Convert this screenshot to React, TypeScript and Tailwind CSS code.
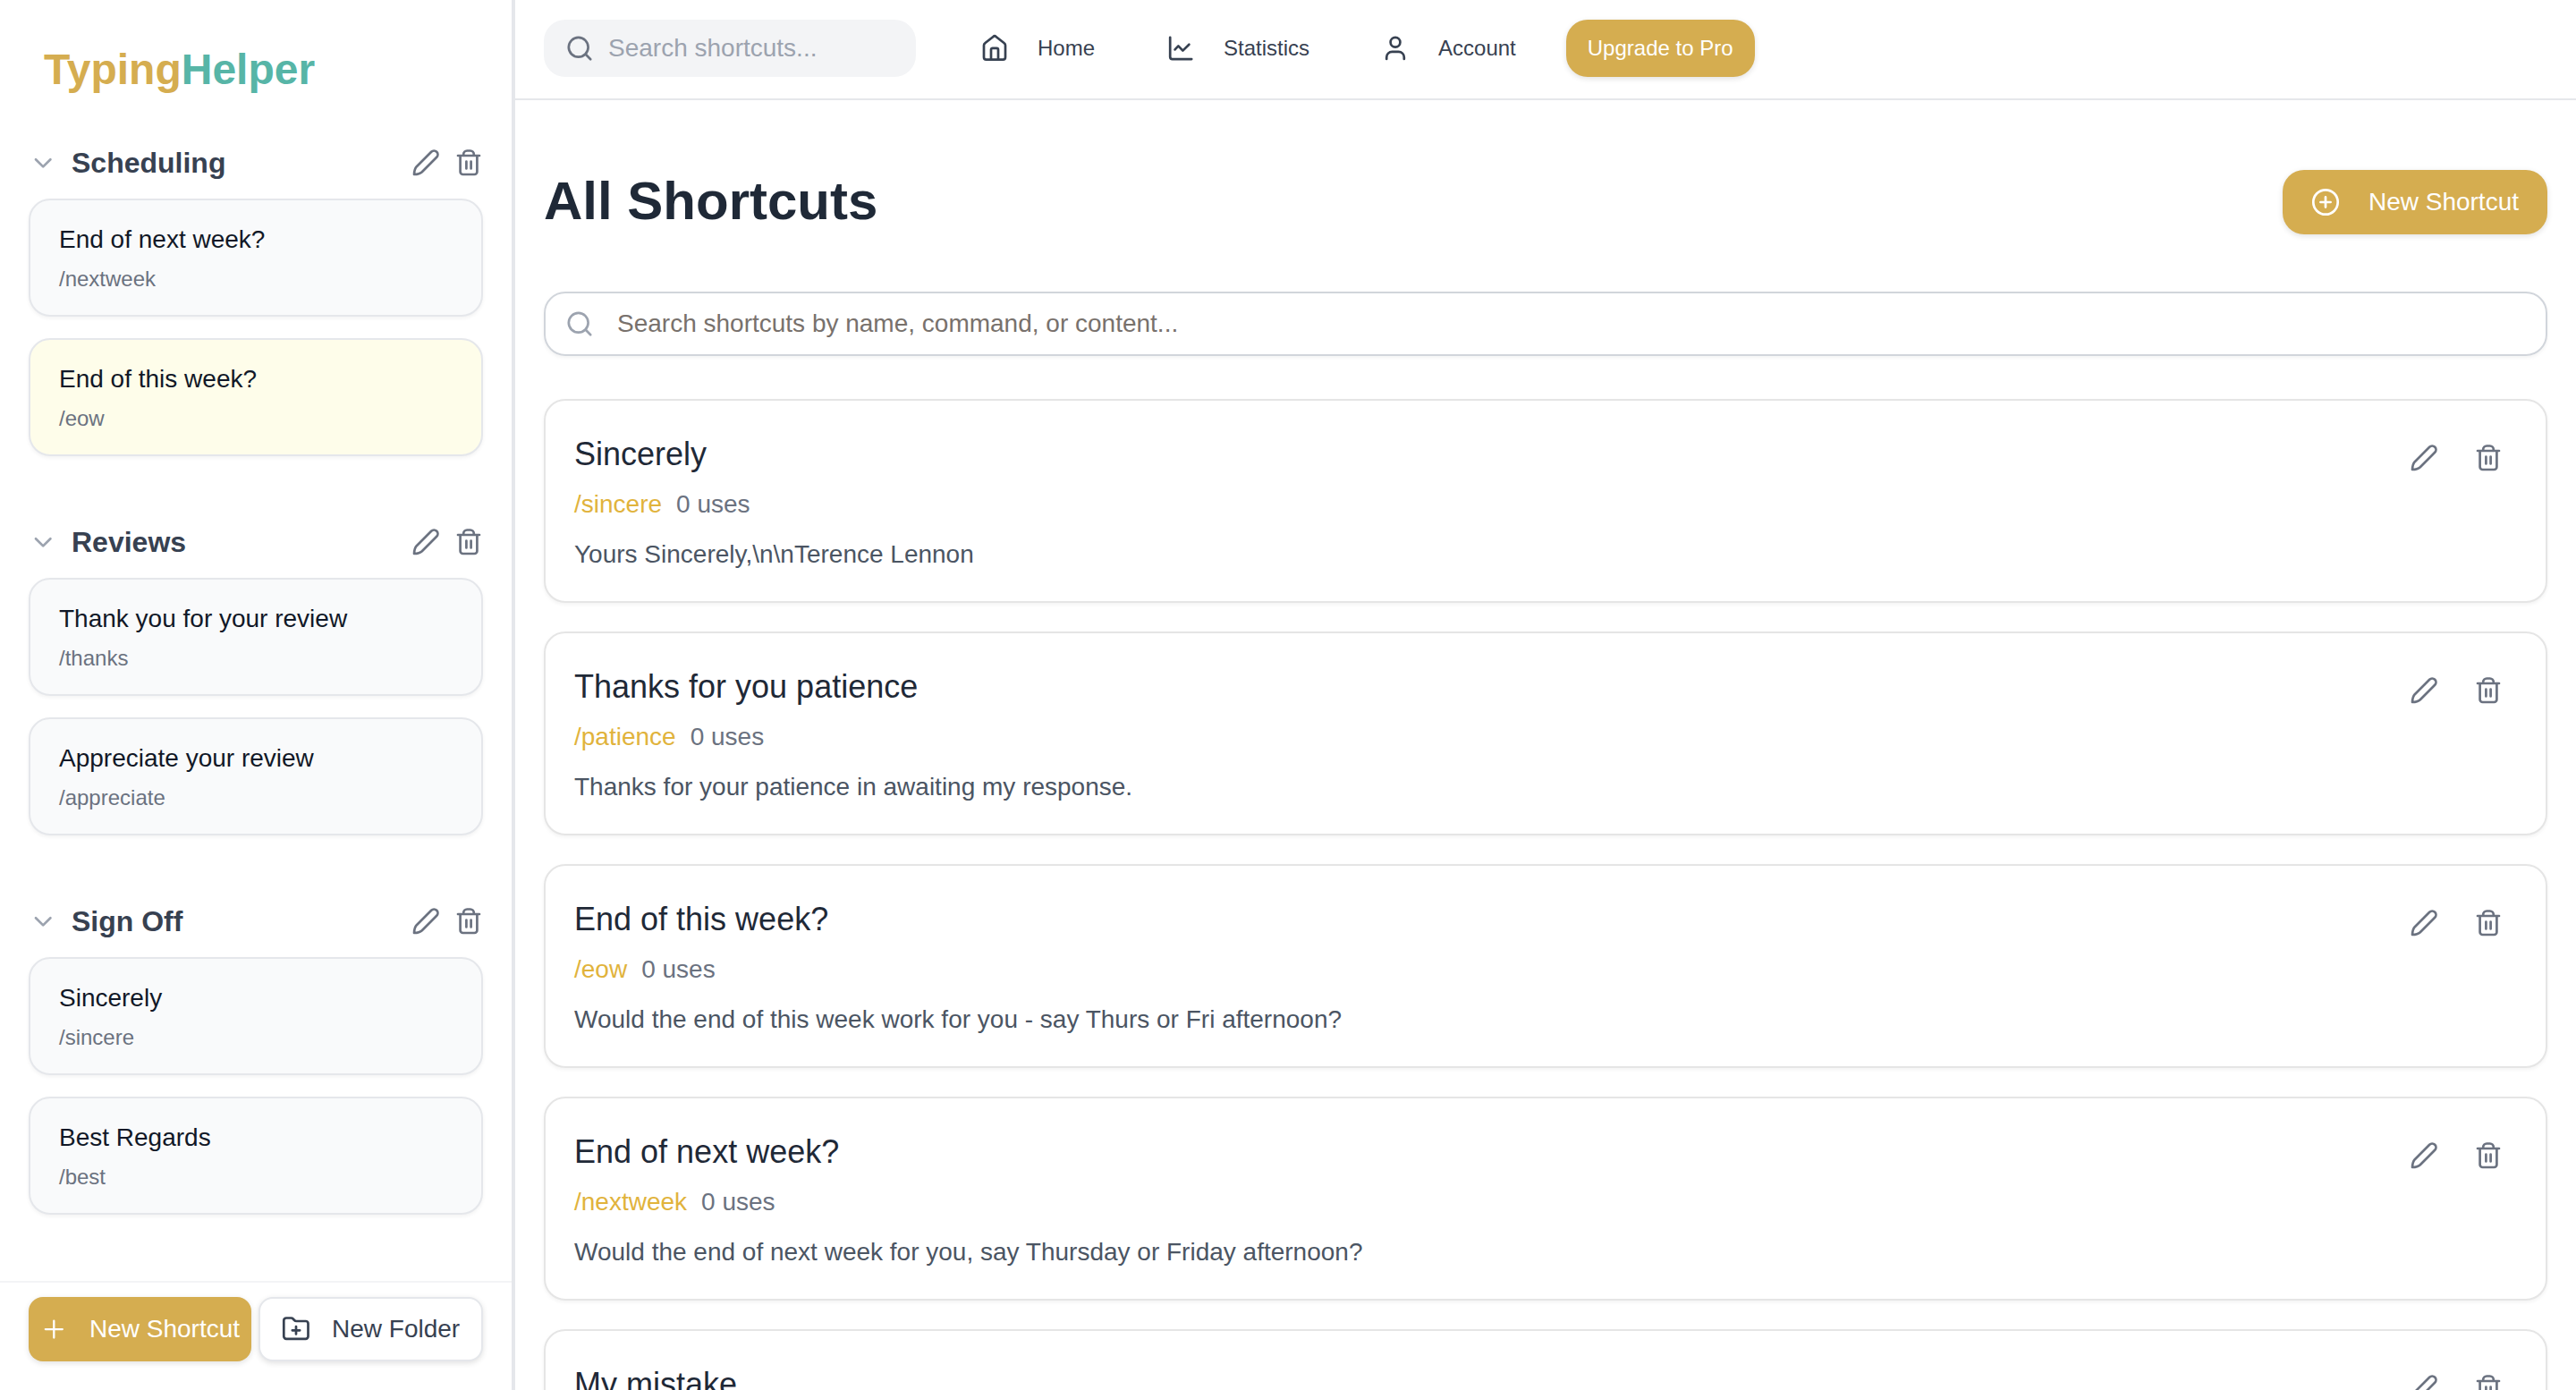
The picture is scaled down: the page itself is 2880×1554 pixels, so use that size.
import type { ReactNode } from 'react'

type Shortcut = {
  name: string
  command: string
  content?: string
  active?: boolean
}

const folders: { name: string; shortcuts: Shortcut[] }[] = [
  {
    name: 'Scheduling',
    shortcuts: [
      { name: 'End of next week?', command: '/nextweek' },
      { name: 'End of this week?', command: '/eow', active: true },
    ],
  },
  {
    name: 'Reviews',
    shortcuts: [
      { name: 'Thank you for your review', command: '/thanks' },
      { name: 'Appreciate your review', command: '/appreciate' },
    ],
  },
  {
    name: 'Sign Off',
    shortcuts: [
      { name: 'Sincerely', command: '/sincere' },
      { name: 'Best Regards', command: '/best' },
    ],
  },
]

const shortcuts: Shortcut[] = [
  { name: 'Sincerely', command: '/sincere', content: 'Yours Sincerely,\\n\\nTerence Lennon' },
  { name: 'Thanks for you patience', command: '/patience', content: 'Thanks for your patience in awaiting my response.' },
  { name: 'End of this week?', command: '/eow', content: 'Would the end of this week work for you - say Thurs or Fri afternoon?' },
  { name: 'End of next week?', command: '/nextweek', content: 'Would the end of next week for you, say Thursday or Friday afternoon?' },
  { name: 'My mistake' , command: '' },
]

function Icon({ children, className = '' }: { children: ReactNode; className?: string }) {
  return (
    <svg
      className={`size-10 shrink-0 ${className}`}
      viewBox="0 0 40 40"
      fill="none"
      stroke="currentColor"
      strokeWidth="2.7"
      strokeLinecap="round"
      strokeLinejoin="round"
    >
      {children}
    </svg>
  )
}

function PencilIcon() {
  return (
    <Icon>
      <path d="M26.2 7.8a4.1 4.1 0 0 1 6 6L15.8 30.2Q13 32.8 7 33 7.2 27 9.8 24.2Z" />
    </Icon>
  )
}

function TrashIcon() {
  return (
    <Icon>
      <path d="M8 12h24M10.6 12v18a3 3 0 0 0 3 3h12.8a3 3 0 0 0 3-3V12M14.2 12v-1.5a4 4 0 0 1 4-4h3.6a4 4 0 0 1 4 4V12M17.4 18.5v8M22.6 18.5v8" />
    </Icon>
  )
}

function SearchIcon({ className }: { className?: string }) {
  return (
    <Icon className={className}>
      <circle cx="18.7" cy="18.8" r="10.9" />
      <path d="m26.8 26.8 5.4 5.4" />
    </Icon>
  )
}

function HomeIcon() {
  return (
    <Icon>
      <path d="M8 16.8c0-1 .4-1.9 1.2-2.5l9.6-7.6a2 2 0 0 1 2.4 0l9.6 7.6c.8.6 1.2 1.5 1.2 2.5V30a2.6 2.6 0 0 1-2.6 2.6H10.6A2.6 2.6 0 0 1 8 30ZM16 32.6V21.5a1.7 1.7 0 0 1 1.7-1.7h4.6a1.7 1.7 0 0 1 1.7 1.7v11" />
    </Icon>
  )
}

function ChartIcon() {
  return (
    <Icon>
      <path d="M8.2 7.8v21.7a2.6 2.6 0 0 0 2.6 2.6h21.4M13.6 21.4l3.8-4 5 5.2 7-6.8" />
    </Icon>
  )
}

function UserIcon() {
  return (
    <Icon>
      <circle cx="20" cy="13.3" r="5.4" />
      <path d="M10.2 32V30a6.2 6.2 0 0 1 6.2-6.2h7.2a6.2 6.2 0 0 1 6.2 6.2v2" />
    </Icon>
  )
}

function Sidebar() {
  return (
    <aside className="flex w-[576px] shrink-0 flex-col border-r-4 border-[#e5e7eb]">
      <div className="pt-12 pl-[49px] text-5xl leading-[60px] font-bold">
        <span className="text-[#d5ad50]">Typing</span>
        <span className="text-[#57b5a7]">Helper</span>
      </div>

      <nav className="flex min-h-0 flex-1 flex-col gap-[72px] overflow-hidden px-8 pt-[50px]">
        {folders.map((folder) => (
          <section key={folder.name}>
            <div className="mb-4 -ml-1 flex h-12 items-center">
              <Icon className="text-[#9ca3af]">
                <path d="m12 16.2 8.2 8.2 8.2-8.2" />
              </Icon>
              <h2 className="ml-3 flex-1 text-[32px] leading-10 font-bold text-[#374151]">{folder.name}</h2>
              <div className="-mr-1 flex gap-2 text-[#6b7280]">
                <PencilIcon />
                <TrashIcon />
              </div>
            </div>
            <div className="flex flex-col gap-6">
              {folder.shortcuts.map((item) => (
                <div
                  key={item.command}
                  className={`rounded-[24px] border-2 border-[#e5e7eb] px-8 py-6 shadow-[0_2px_4px_rgba(0,0,0,0.05)] ${
                    item.active ? 'bg-[#fefdea]' : 'bg-[#f9fafb]'
                  }`}
                >
                  <p className="text-[28px] leading-10 text-[#111827]">{item.name}</p>
                  <p className="mt-2 text-2xl leading-8 text-[#6b7280]">{item.command}</p>
                </div>
              ))}
            </div>
          </section>
        ))}
      </nav>

      <div className="flex h-[122px] gap-2 border-t-2 border-[#f3f4f6] px-8 pt-4">
        <button className="flex h-[72px] w-[249px] items-center gap-5 rounded-[16px] bg-[#d5ad50] pl-2 text-[28px] whitespace-nowrap text-white shadow-[0_2px_6px_rgba(0,0,0,0.12)]">
          <Icon>
            <path strokeWidth="2.3" d="M20.3 10.6v19M10.8 20.1h19" />
          </Icon>
          New Shortcut
        </button>
        <button className="flex h-[72px] flex-1 items-center gap-5 rounded-[16px] border-2 border-[#e5e7eb] bg-white pl-5 text-[28px] whitespace-nowrap text-[#374151] shadow-[0_2px_6px_rgba(0,0,0,0.12)]">
          <Icon>
            <path d="M6.3 10.3a2.8 2.8 0 0 1 2.8-2.8h5.4c.9 0 1.6.3 2.2 1l1.4 1.5c.6.7 1.3 1 2.2 1h10.4a2.8 2.8 0 0 1 2.8 2.8v14.2a2.8 2.8 0 0 1-2.8 2.8H9.1a2.8 2.8 0 0 1-2.8-2.8ZM20 17.1v8.4M15.8 21.3h8.4" />
          </Icon>
          New Folder
        </button>
      </div>
    </aside>
  )
}

function Header() {
  return (
    <header className="flex h-28 shrink-0 items-start border-b-2 border-[#e5e7eb] px-8 pt-[22px]">
      <div className="flex h-16 w-[416px] items-center gap-3 rounded-[24px] bg-[#f3f4f6] px-5">
        <SearchIcon className="text-[#6b7280]" />
        <span className="text-[28px] text-[#9ca3af]">Search shortcuts...</span>
      </div>
      <nav className="ml-[68px] flex h-16 items-center gap-[76px] text-2xl text-[#374151]">
        <a className="flex items-center gap-7">
          <HomeIcon />
          Home
        </a>
        <a className="flex items-center gap-7">
          <ChartIcon />
          Statistics
        </a>
        <a className="flex items-center gap-7">
          <UserIcon />
          Account
        </a>
      </nav>
      <button className="ml-14 h-16 rounded-[24px] bg-[#d5ad50] px-6 text-2xl text-white shadow-[0_2px_6px_rgba(0,0,0,0.12)]">
        Upgrade to Pro
      </button>
    </header>
  )
}

function ShortcutCard({ item }: { item: Shortcut }) {
  return (
    <article className="flex h-[228px] shrink-0 justify-between rounded-[24px] border-2 border-[#e5e5e5] bg-white p-8 shadow-[0_2px_4px_rgba(0,0,0,0.05)]">
      <div className="text-[28px] leading-10">
        <h3 className="text-4xl leading-[56px] text-[#1f2937]">{item.name}</h3>
        {item.content && (
          <>
            <div className="mt-2 flex gap-4">
              <span className="text-[#e1b33c]">{item.command}</span>
              <span className="text-[#6b7280]">0 uses</span>
            </div>
            <p className="mt-4 text-[#4b5563]">{item.content}</p>
          </>
        )}
      </div>
      <div className="flex gap-2 text-[#6b7280]">
        <button className="flex size-16 items-center justify-center">
          <PencilIcon />
        </button>
        <button className="flex size-16 items-center justify-center">
          <TrashIcon />
        </button>
      </div>
    </article>
  )
}

export default function App() {
  return (
    <div className="flex h-screen overflow-hidden bg-white font-['Liberation_Sans',Arial,sans-serif] antialiased">
      <Sidebar />
      <div className="flex min-w-0 flex-1 flex-col">
        <Header />
        <main className="flex min-h-0 flex-1 flex-col overflow-hidden px-8 pt-[78px]">
          <div className="flex shrink-0 items-start justify-between">
            <h1 className="text-[60px] leading-[70px] font-bold text-[#1f2937]">All Shortcuts</h1>
            <button className="flex h-[72px] items-center gap-7 rounded-[24px] bg-[#d5ad50] pr-8 pl-7 text-[28px] text-white shadow-[0_2px_6px_rgba(0,0,0,0.12)]">
              <Icon>
                <circle cx="20" cy="20" r="13.7" />
                <path d="M20 14.4v11.2M14.4 20h11.2" />
              </Icon>
              New Shortcut
            </button>
          </div>

          <div className="mt-16 flex h-[72px] shrink-0 items-center gap-[22px] rounded-[24px] border-2 border-[#d1d5db] px-[18px] shadow-[0_2px_4px_rgba(0,0,0,0.05)]">
            <SearchIcon className="text-[#9ca3af]" />
            <span className="text-[28px] text-[#78716c]">Search shortcuts by name, command, or content...</span>
          </div>

          <div className="mt-12 flex flex-col gap-8">
            {shortcuts.map((item) => (
              <ShortcutCard key={item.name} item={item} />
            ))}
          </div>
        </main>
      </div>
    </div>
  )
}
